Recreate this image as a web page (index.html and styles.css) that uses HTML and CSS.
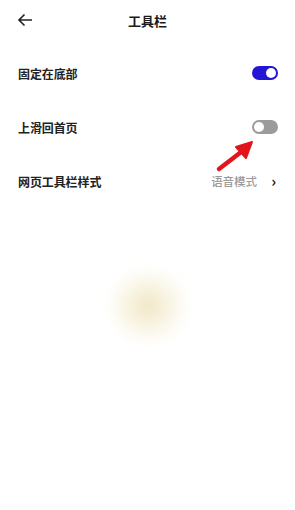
FILE: index.html
```html
<!DOCTYPE html>
<html lang="zh-CN">
<head>
<meta charset="utf-8">
<link rel="stylesheet" href="styles.css">
</head>
<body>
<div class="page">
  <header class="topbar">
    <svg class="back" width="16" height="14" viewBox="0 0 16 14"><path d="M15 7H2M7.5 1.5L2 7l5.5 5.5" fill="none" stroke="#222" stroke-width="1.6"/></svg>
    <div class="title">工具栏</div>
  </header>
  <div class="list">
    <div class="row">
      <span class="label">固定在底部</span>
      <span class="toggle on"><span class="knob"></span></span>
    </div>
    <div class="row">
      <span class="label">上滑回首页</span>
      <span class="toggle off"><span class="knob"></span></span>
    </div>
    <div class="row">
      <span class="label">网页工具栏样式</span>
      <span class="right"><span class="value">语音模式</span><span class="chev">›</span></span>
    </div>
  </div>
  <svg class="annot" width="44" height="36" viewBox="0 0 44 36"><path d="M4 31L30 11" stroke="#e3141b" stroke-width="4.5" stroke-linecap="round"/><path d="M37 4L21 9L31 20Z" fill="#e3141b" stroke="#e3141b" stroke-width="2" stroke-linejoin="round"/></svg>
  <div class="blob"></div>
</div>
</body>
</html>
```
FILE: styles.css
```css
html, body { margin: 0; padding: 0; background: #fff; }
body { font-family: "Noto Sans CJK SC", "Noto Sans", sans-serif; color: #222; }
.page { position: relative; width: 295px; height: 510px; overflow: hidden; }
.topbar { position: relative; height: 40px; display: flex; align-items: center; justify-content: center; }
.back { position: absolute; left: 17px; top: 13px; }
.title { font-size: 13px; font-weight: 700; color: #1a1a1a; }
.list { padding-top: 6px; }
.row { height: 54px; display: flex; align-items: center; justify-content: space-between; padding: 0 17px 0 18px; }
.label { font-size: 12px; font-weight: 700; color: #222; letter-spacing: -0.1px; }
.toggle { position: relative; width: 26px; height: 14px; border-radius: 7px; box-sizing: border-box; display: flex; align-items: center; }
.toggle.on { background: #2415d6; justify-content: flex-end; padding-right: 2px; }
.toggle.off { background: #9b9b9b; justify-content: flex-start; padding-left: 2px; }
.knob { width: 10px; height: 10px; border-radius: 50%; background: #fff; }
.right { display: flex; align-items: center; }
.value { font-size: 11.5px; font-weight: 500; color: #9a9a9a; margin-right: 14px; }
.chev { font-size: 15px; color: #222; font-weight: 700; line-height: 1; margin-top: -2px; margin-right: 2px; }
.annot { position: absolute; left: 215px; top: 138px; }
.blob { position: absolute; left: 108px; top: 268px; width: 80px; height: 76px; border-radius: 40%; background: radial-gradient(ellipse, rgba(232,215,160,0.6) 0%, rgba(240,230,190,0.35) 45%, rgba(250,245,230,0) 75%); filter: blur(4px); }
```
